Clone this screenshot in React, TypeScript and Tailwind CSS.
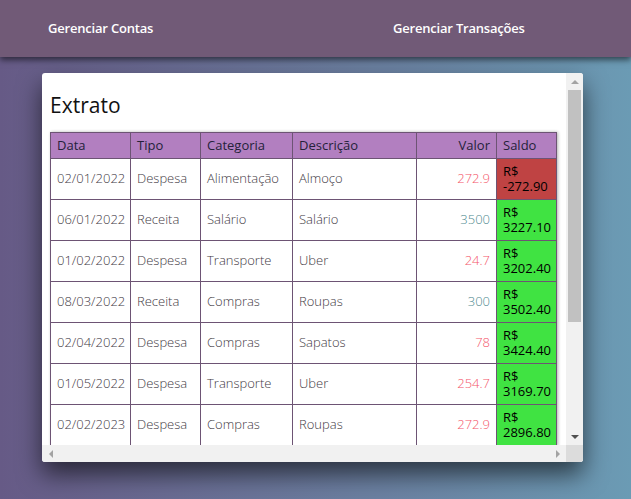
import React from "react";

interface Transacao {
  data: string;
  tipo: "Despesa" | "Receita";
  categoria: string;
  descricao: string;
  valor: string;
  saldo: string;
}

const transacoes: Transacao[] = [
  { data: "02/01/2022", tipo: "Despesa", categoria: "Alimentação", descricao: "Almoço", valor: "272.9", saldo: "-272.90" },
  { data: "06/01/2022", tipo: "Receita", categoria: "Salário", descricao: "Salário", valor: "3500", saldo: "3227.10" },
  { data: "01/02/2022", tipo: "Despesa", categoria: "Transporte", descricao: "Uber", valor: "24.7", saldo: "3202.40" },
  { data: "08/03/2022", tipo: "Receita", categoria: "Compras", descricao: "Roupas", valor: "300", saldo: "3502.40" },
  { data: "02/04/2022", tipo: "Despesa", categoria: "Compras", descricao: "Sapatos", valor: "78", saldo: "3424.40" },
  { data: "01/05/2022", tipo: "Despesa", categoria: "Transporte", descricao: "Uber", valor: "254.7", saldo: "3169.70" },
  { data: "02/02/2023", tipo: "Despesa", categoria: "Compras", descricao: "Roupas", valor: "272.9", saldo: "2896.80" },
];

const cell = "border border-[#6d5474] px-[6px] align-middle";

// classic scrollbar pieces
function Arrow({ dir }: { dir: "up" | "down" | "left" | "right" }) {
  const shape = {
    up: "border-x-[4px] border-x-transparent border-b-[4px] border-b-[#a3a3a3]",
    down: "border-x-[4px] border-x-transparent border-t-[4px] border-t-[#505050]",
    left: "border-y-[4px] border-y-transparent border-r-[4px] border-r-[#a3a3a3]",
    right: "border-y-[4px] border-y-transparent border-l-[4px] border-l-[#a3a3a3]",
  }[dir];
  return (
    <div className="w-[17px] h-[17px] shrink-0 flex items-center justify-center">
      <div className={`w-0 h-0 ${shape}`} />
    </div>
  );
}

export default function App() {
  return (
    <div className="min-h-[499px] bg-gradient-to-r from-[#665a86] to-[#6b9bb4] font-['Open_Sans',sans-serif]">
      {/* Navbar */}
      <nav className="h-[57px] bg-[#715a77] shadow-[0_3px_6px_rgba(0,0,0,0.55)] grid grid-cols-[345px_1fr] items-center pl-12 text-white text-[13px] font-semibold tracking-[-0.2px]">
        <span>Gerenciar Contas</span>
        <span>Gerenciar Transações</span>
      </nav>

      {/* Extrato card */}
      <div className="ml-[42px] mt-4 w-[541px] h-[389px] bg-white rounded-[3px] overflow-hidden flex flex-col shadow-[0_12px_24px_rgba(0,0,0,0.6)]">
        <div className="flex flex-1 min-h-0">
          <div className="flex-1 min-w-0 overflow-hidden px-2">
            <h2 className="pt-[18px] mb-[13px] text-[21px] leading-7 text-[#111]">Extrato</h2>

            <table className="w-[506px] table-fixed border-collapse text-[13px] font-light shadow-[1px_0_3px_rgba(0,0,0,0.3)]">
              <colgroup>
                <col className="w-[80px]" />
                <col className="w-[70px]" />
                <col className="w-[92px]" />
                <col className="w-[124px]" />
                <col className="w-[80px]" />
                <col className="w-[60px]" />
              </colgroup>
              <thead>
                <tr className="h-[26px] bg-[#b27fc0] text-[#25223a]">
                  <th className={`${cell} text-left font-normal`}>Data</th>
                  <th className={`${cell} text-left font-normal`}>Tipo</th>
                  <th className={`${cell} text-left font-normal`}>Categoria</th>
                  <th className={`${cell} text-left font-normal`}>Descrição</th>
                  <th className={`${cell} text-right font-normal`}>Valor</th>
                  <th className={`${cell} text-left font-normal`}>Saldo</th>
                </tr>
              </thead>
              <tbody className="text-[#3f3a44]">
                {transacoes.map((t, i) => {
                  const negativo = t.saldo.startsWith("-");
                  return (
                    <tr key={i} className="h-[41px]">
                      <td className={cell}>{t.data}</td>
                      <td className={cell}>{t.tipo}</td>
                      <td className={cell}>{t.categoria}</td>
                      <td className={cell}>{t.descricao}</td>
                      <td
                        className={`${cell} text-right ${t.tipo === "Despesa" ? "text-[#f4566a]" : "text-[#4f8a8f]"}`}
                      >
                        {t.valor}
                      </td>
                      <td
                        className={`${cell} text-[13px] leading-[15px] font-normal text-black ${negativo ? "bg-[#bf4343]" : "bg-[#40e342]"}`}
                      >
                        <div>R$</div>
                        <div>{t.saldo}</div>
                      </td>
                    </tr>
                  );
                })}
              </tbody>
            </table>
          </div>

          {/* vertical scrollbar */}
          <div className="w-[17px] bg-[#f1f1f1] flex flex-col">
            <Arrow dir="up" />
            <div className="mx-[2px] h-[232px] bg-[#c1c1c1]" />
            <div className="flex-1" />
            <Arrow dir="down" />
          </div>
        </div>

        {/* horizontal scrollbar */}
        <div className="h-[17px] flex bg-[#f1f1f1]">
          <Arrow dir="left" />
          <div className="flex-1" />
          <Arrow dir="right" />
          <div className="w-[17px] bg-[#dcdcdc]" />
        </div>
      </div>
    </div>
  );
}
